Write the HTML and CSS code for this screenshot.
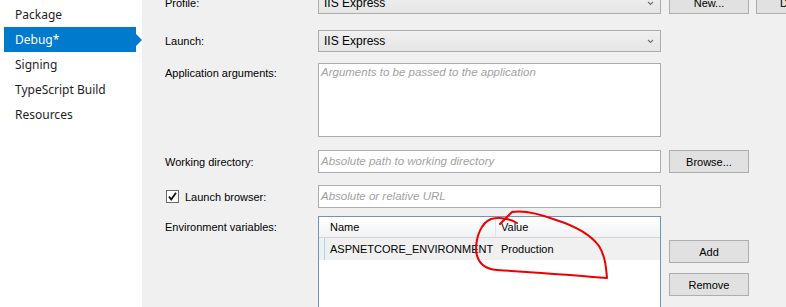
FILE: index.html
```html
<!DOCTYPE html>
<html lang="en">
<head>
  <meta charset="UTF-8">
  <title>Debug</title>
  <link rel="stylesheet" href="styles.css">
</head>
<body>
  <ul class="nav">
    <li>Package</li>
    <li class="active">Debug*</li>
    <li>Signing</li>
    <li>TypeScript Build</li>
    <li>Resources</li>
  </ul>

  <div class="main">
    <div class="form">
      <div class="row row-profile">
        <div class="label">Profile:</div>
        <div class="combo">IIS Express
          <svg class="chev" width="7" height="5" viewBox="0 0 7 5"><polyline points="1,1 3.5,3.5 6,1" fill="none" stroke="#707070" stroke-width="1.1"/></svg>
        </div>
        <button class="btn">New...</button>
        <button class="btn">Delete</button>
      </div>

      <div class="row row-launch">
        <div class="label">Launch:</div>
        <div class="combo">IIS Express
          <svg class="chev" width="7" height="5" viewBox="0 0 7 5"><polyline points="1,1 3.5,3.5 6,1" fill="none" stroke="#707070" stroke-width="1.1"/></svg>
        </div>
      </div>

      <div class="row row-args">
        <div class="label label-top">Application arguments:</div>
        <div class="textarea"><span class="hint">Arguments to be passed to the application</span></div>
      </div>

      <div class="row row-dir">
        <div class="label">Working directory:</div>
        <div class="input"><span class="hint">Absolute path to working directory</span></div>
        <button class="btn">Browse...</button>
      </div>

      <div class="row row-browser">
        <div class="label label-check">
          <svg class="check" width="13" height="13" viewBox="0 0 13 13">
            <rect x="0.5" y="0.5" width="12" height="12" fill="#fff" stroke="#6a6a6a"/>
            <polyline points="3,6.5 5.2,9.5 10,2.8" fill="none" stroke="#111" stroke-width="1.8"/>
          </svg>
          Launch browser:
        </div>
        <div class="input"><span class="hint">Absolute or relative URL</span></div>
      </div>

      <div class="row row-env">
        <div class="label label-env">Environment variables:</div>
        <div class="grid">
          <div class="grid-head">
            <div class="cell-side"></div>
            <div class="cell cell-name">Name</div>
            <div class="cell cell-value">Value</div>
          </div>
          <div class="grid-row">
            <div class="cell-side cell-side-cur"></div>
            <div class="cell cell-name">ASPNETCORE_ENVIRONMENT</div>
            <div class="cell cell-value">Production</div>
          </div>
        </div>
        <div class="side-btns">
          <button class="btn">Add</button>
          <button class="btn">Remove</button>
        </div>
      </div>
    </div>
  </div>

  <svg class="scribble" width="786" height="307" viewBox="0 0 786 307">
    <path d="M517 223 C510 219 500 217 491 219 C481 223 476 237 476 250 C477 262 484 269 497 270 C530 272 570 275 607 278 C606 266 605 256 599 246 C590 234 575 226 556 220 C540 214 524 210 512 212 L500 224"
      fill="none" stroke="#ee0000" stroke-width="2" stroke-linecap="round" stroke-linejoin="round"/>
  </svg>
</body>
</html>
```

FILE: styles.css
```css
body {
  margin: 0;
  display: flex;
  width: 786px;
  height: 307px;
  overflow: hidden;
  font-family: "Liberation Sans", Arial, sans-serif;
  font-size: 11px;
  color: #000;
  background: #f0f0f0;
  position: relative;
}

.nav {
  list-style: none;
  margin: 0;
  padding: 2px 0 0 4px;
  width: 138px;
  flex: none;
  background: #fff;
  font-family: "Noto Sans", sans-serif;
  font-size: 12px;
  color: #1e1e1e;
}

.nav li {
  position: relative;
  width: 121px;
  height: 25px;
  line-height: 26px;
  padding-left: 11px;
}

.nav li.active {
  background: #007acc;
  color: #fff;
}

.nav li.active::after {
  content: "";
  position: absolute;
  right: -6px;
  top: 7px;
  border-left: 6px solid #007acc;
  border-top: 6px solid transparent;
  border-bottom: 6px solid transparent;
}

.main {
  flex: 1;
  padding-left: 23px;
}

.form {
  margin-top: -9px;
}

.row {
  display: flex;
  align-items: center;
}

.label {
  width: 153px;
  flex: none;
}

.label-top {
  align-self: flex-start;
  padding-top: 4px;
}

.label-check {
  display: flex;
  align-items: center;
  gap: 6px;
  margin-left: 1px;
  width: 152px;
}

.label-env {
  align-self: flex-start;
  padding-top: 5px;
}

.combo {
  position: relative;
  width: 336px;
  height: 20px;
  line-height: 20px;
  padding-left: 5px;
  border: 1px solid #acacac;
  background: linear-gradient(#f0f0f0, #e5e5e5);
  font-size: 12px;
}

.chev {
  position: absolute;
  right: 6px;
  top: 8px;
}

.btn {
  width: 80px;
  height: 23px;
  margin-left: 8px;
  border: 1px solid #adadad;
  background: #e1e1e1;
  font-family: "Liberation Sans", Arial, sans-serif;
  font-size: 11px;
  color: #000;
  padding: 0;
}

.row-profile .btn + .btn {
  margin-left: 7px;
  flex: none;
}

.row-launch {
  margin-top: 16px;
}

.row-args {
  margin-top: 11px;
}

.textarea {
  width: 339px;
  height: 70px;
  border: 1px solid #abadb3;
  background: #fff;
  padding: 2px 0 0 2px;
}

.hint {
  font-style: italic;
  color: #a2a2a2;
  font-size: 11.5px;
}

.row-dir {
  margin-top: 13px;
}

.row-browser {
  margin-top: 12px;
}

.input {
  width: 339px;
  height: 21px;
  line-height: 21px;
  padding-left: 2px;
  border: 1px solid #abadb3;
  background: #fff;
}

.row-env {
  margin-top: 8px;
  align-items: flex-start;
}

.grid {
  width: 341px;
  height: 100px;
  border: 1px solid #6e94bb;
  background: #fff;
  font-size: 11px;
}

.grid-head,
.grid-row {
  display: flex;
}

.grid-head {
  height: 20px;
  background: linear-gradient(#ffffff, #f1f2f4);
  border-bottom: 1px solid #d5d5d5;
}

.grid-row {
  height: 22px;
  background: #f0f0f0;
}

.cell-side {
  width: 6px;
  flex: none;
}

.cell-side-cur {
  border-right: 1px solid #a8d4f5;
  width: 5px;
}

.cell {
  line-height: 20px;
  padding-left: 5px;
  white-space: nowrap;
}

.grid-row .cell {
  line-height: 22px;
}

.cell-name {
  width: 166px;
  flex: none;
  overflow: hidden;
}

.grid-head .cell-name {
  border-right: 1px solid #e3e3e3;
  width: 165px;
}

.side-btns {
  display: flex;
  flex-direction: column;
  gap: 10px;
  margin-top: 24px;
}

.scribble {
  position: absolute;
  left: 0;
  top: 0;
  pointer-events: none;
}
```
